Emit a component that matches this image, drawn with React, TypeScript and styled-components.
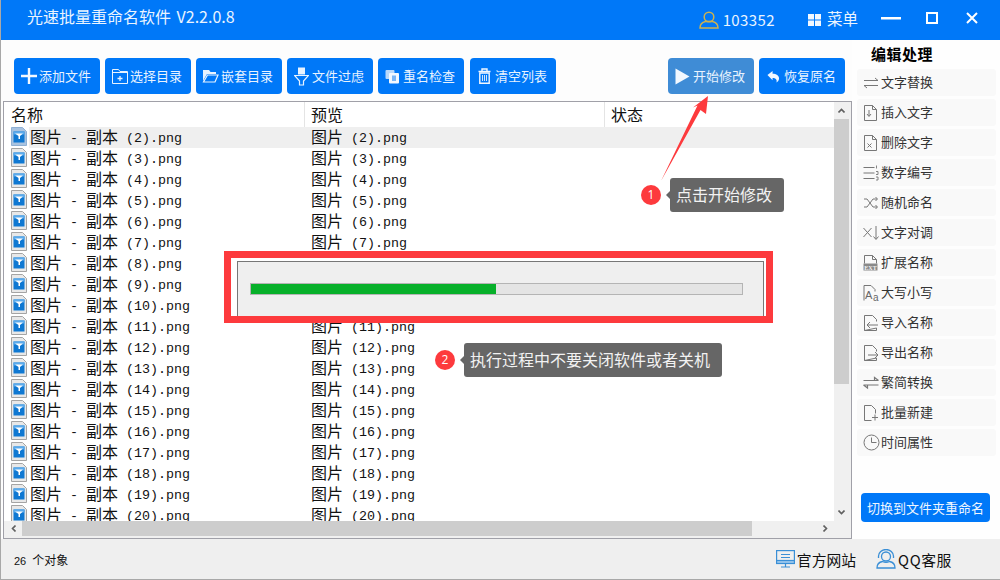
import React from "react";
import styled, { createGlobalStyle } from "styled-components";

const GlobalStyle = createGlobalStyle`
    html, body {
        margin: 0;
        padding: 0;
        background: #ffffff;
    }
    * {
        box-sizing: border-box;
    }
`;

const UI_FONT = `"Noto Sans CJK SC", "Open Sans", sans-serif`;
const BLUE = "#0078f8";
const RED = "#fd3a3d";

const Win = styled.div`
    position: relative;
    width: 1000px;
    height: 580px;
    display: flex;
    flex-direction: column;
    overflow: hidden;
    background: #fdfdfd;
    border-left: 1px solid #a8a8a8;
    border-bottom: 1px solid #a8a8a8;
    font-family: ${UI_FONT};
`;

const TitleBar = styled.div`
    height: 40px;
    flex: none;
    margin-left: -1px;
    display: flex;
    align-items: center;
    background: ${BLUE};
    color: #eaf4ff;
`;

const AppTitle = styled.div`
    margin-left: 27px;
    padding-bottom: 8px;
    font-size: 16px;
    word-spacing: 2px;
    letter-spacing: 0;
    white-space: nowrap;
`;

const User = styled.div`
    margin-left: auto;
    display: flex;
    align-items: center;
    gap: 4px;
    font-size: 15px;
    letter-spacing: 0.4px;
    padding-bottom: 1px;
`;

const MenuBtn = styled.div`
    margin-left: 33px;
    padding-bottom: 4px;
    display: flex;
    align-items: center;
    gap: 6px;
    font-size: 15.5px;
    svg {
        margin-top: 3px;
    }
`;

const WinBtns = styled.div`
    margin-left: 23px;
    margin-right: 22px;
    padding-bottom: 4px;
    display: flex;
    align-items: center;
    gap: 25px;
    svg {
        display: block;
    }
    svg:last-child {
        margin-left: 3px;
    }
`;

const Main = styled.div`
    flex: 1;
    min-height: 0;
    display: flex;
`;

const LeftCol = styled.div`
    width: 851px;
    flex: none;
    padding-left: 2px;
    display: flex;
    flex-direction: column;
`;

const Toolbar = styled.div`
    height: 61px;
    flex: none;
    padding: 18px 7px 0 11px;
    display: flex;
    justify-content: space-between;
`;

const ToolGroup = styled.div`
    display: flex;
    gap: 5px;
`;

const ToolBtn = styled.div<{ $active?: boolean; $shift?: boolean }>`
    width: 86px;
    height: 36px;
    margin-left: ${(p) => (p.$shift ? "1px" : "0")};
    display: flex;
    align-items: center;
    padding: 0 0 2px 4px;
    border-radius: 4px;
    background: ${(p) => (p.$active ? "#3f8cd6" : BLUE)};
    color: #e8f3ff;
    font-size: 13px;
    white-space: nowrap;
`;

const ToolIcon = styled.span`
    width: 21px;
    flex: none;
    display: flex;
    justify-content: center;
    padding-top: 2px;
`;

const ListBox = styled.div`
    flex: 1;
    min-height: 0;
    display: grid;
    grid-template-columns: 1fr 17px;
    grid-template-rows: 1fr 17px;
    border: 1px solid #a0a0a8;
    background: #ffffff;
`;

const ListBody = styled.div`
    overflow: hidden;
    min-width: 0;
    min-height: 0;
`;

const HeadRow = styled.div`
    height: 25px;
    display: grid;
    grid-template-columns: 300px 300px 1fr;
    font-size: 16px;
    line-height: 24px;
    color: #111;
`;

const HeadCell = styled.div`
    padding-left: 7px;
    & + & {
        border-left: 1px solid #e4e4e4;
        padding-left: 6px;
    }
`;

const Row = styled.div<{ $selected?: boolean }>`
    height: 21px;
    display: grid;
    grid-template-columns: 300px 300px 1fr;
    line-height: 20px;
    font-family: "Liberation Mono", monospace;
    font-size: 13.33px;
    color: #111;
    white-space: pre;
    background: ${(p) =>
        p.$selected
            ? "linear-gradient(to right, transparent 25px, #efefef 25px)"
            : "transparent"};
`;

const NameCell = styled.div`
    display: flex;
    align-items: flex-start;
    padding-left: 7px;
    svg {
        flex: none;
    }
`;

const PreviewCell = styled.div`
    padding-left: 7px;
    margin-top: -2px;
`;

const Cjk = styled.span`
    position: relative;
    top: 1px;
    font-family: "Noto Sans CJK SC", sans-serif;
    font-size: 16px;
`;

const RowName = styled.span`
    margin: -2px 0 0 3px;
`;

const VScroll = styled.div`
    display: flex;
    flex-direction: column;
    align-items: stretch;
    background: #f0f0f0;
    padding-right: 2px;
`;

const ScrollArrow = styled.div`
    height: 17px;
    flex: none;
    display: flex;
    align-items: center;
    justify-content: center;
`;

const VThumb = styled.div`
    height: 265px;
    background: #cdcdcd;
`;

const Spacer = styled.div`
    flex: 1;
`;

const HScroll = styled.div`
    display: flex;
    align-items: center;
    background: #f0f0f0;
    padding: 0 0 2px 1px;
`;

const HArrow = styled.div`
    width: 17px;
    height: 15px;
    flex: none;
    display: flex;
    align-items: center;
    justify-content: center;
`;

const HThumb = styled.div`
    width: 730px;
    height: 15px;
    background: #cdcdcd;
`;

const Corner = styled.div`
    background: #f0f0f0;
`;

const SidePanel = styled.div`
    flex: 1;
    display: flex;
    flex-direction: column;
    padding: 0 4px 0 5px;
    background: #fefefe;
`;

const SideTitle = styled.div`
    height: 29px;
    padding: 3px 0 0 14px;
    font-size: 15px;
    line-height: 22px;
    font-weight: 700;
    letter-spacing: 0.5px;
    color: #000;
`;

const SideList = styled.div`
    display: flex;
    flex-direction: column;
    gap: 3px;
`;

const SideItem = styled.div`
    height: 27px;
    display: flex;
    align-items: center;
    padding: 0 0 2px 6px;
    border-radius: 3px;
    background: #f9f9f9;
    font-size: 13px;
    color: #333;
    white-space: nowrap;
`;

const SideGlyph = styled.span`
    width: 18px;
    flex: none;
    display: flex;
    padding-top: 2px;
`;

const SwitchBtn = styled.div`
    margin: auto 6px 17px 4px;
    height: 29px;
    padding-bottom: 1px;
    display: flex;
    align-items: center;
    justify-content: center;
    border-radius: 4px;
    background: ${BLUE};
    color: #eef6ff;
    font-size: 13px;
    white-space: nowrap;
`;

const StatusBar = styled.div`
    height: 40px;
    flex: none;
    display: flex;
    align-items: center;
    padding-left: 13px;
    background: #efefef;
    color: #111;
`;

const Count = styled.div`
    font-family: "Liberation Sans", sans-serif;
    font-size: 11px;
    word-spacing: 3px;
    white-space: pre;
    span {
        font-family: "Noto Sans CJK SC", sans-serif;
        font-size: 12px;
    }
`;

const StatusLink = styled.div<{ $first?: boolean }>`
    display: flex;
    align-items: center;
    gap: 2px;
    margin-left: ${(p) => (p.$first ? "auto" : "20px")};
    margin-right: ${(p) => (p.$first ? "0" : "48px")};
    font-size: 14.8px;
    letter-spacing: ${(p) => (p.$first ? "0" : "0.6px")};
    color: #111;
    white-space: nowrap;
`;

/* annotations lying over the window */
const ArrowLayer = styled.svg`
    position: absolute;
    left: -1px;
    top: 0;
    pointer-events: none;
`;

const Bubble = styled.div<{ $x: number; $y: number; $w: number }>`
    position: absolute;
    left: ${(p) => p.$x - 1}px;
    top: ${(p) => p.$y}px;
    width: ${(p) => p.$w}px;
    height: 34px;
    padding-left: 6px;
    border-radius: 3px;
    background: #666666;
    color: #f2f2f2;
    font-size: 16px;
    line-height: 33px;
    white-space: nowrap;
    &::before {
        content: "";
        position: absolute;
        left: -4px;
        top: 13px;
        border-style: solid;
        border-width: 4px 4px 4px 0;
        border-color: transparent #666666 transparent transparent;
    }
`;

const Badge = styled.div<{ $x: number; $y: number }>`
    position: absolute;
    left: ${(p) => p.$x - 11}px;
    top: ${(p) => p.$y - 10}px;
    width: 20px;
    height: 20px;
    border-radius: 50%;
    background: ${RED};
    color: #fff;
    font-family: "Open Sans", sans-serif;
    font-size: 12px;
    line-height: 20px;
    text-align: center;
`;

const RedFrame = styled.div`
    position: absolute;
    left: 223px;
    top: 251px;
    width: 549px;
    height: 72px;
    padding: 3px 2px 0 6px;
    border: 7px solid ${RED};
    background: #ffffff;
`;

const ProgressDialog = styled.div`
    height: 100%;
    padding: 21px 20px 0 12px;
    border: 1px solid #777777;
    border-bottom: 0;
    background: #efefef;
`;

const ProgressTrack = styled.div`
    height: 12px;
    border: 1px solid #b4b4b4;
    background: #e4e4e4;
`;

const ProgressFill = styled.div`
    height: 100%;
    background: #07b02a;
`;

const FileIcon = ({ selected }: { selected?: boolean }) => (
    <svg width="16" height="19" viewBox="0 0 16 19">
        <path
            d="M0.500 0.500h11l4 4v14h-15z"
            fill={selected ? "#a9c3e0" : "#e8e8e8"}
            stroke={selected ? "#8fb0d4" : "#a4a4a4"}
        />
        <rect x="2.500" y="4.500" width="11" height="11" fill="#0f78d2" />
        <rect x="2.500" y="4.500" width="11" height="3" fill="#5aaaec" />
        <path d="M4 6.500h8l-3 2.500v3H7.500V9z" fill="#ffffff" />
    </svg>
);

const s = { fill: "none", stroke: "#e8f3ff", strokeWidth: 1 };

const Plus = () => (
    <svg width="16" height="16" viewBox="0 0 16 16">
        <path d="M8 0v16M0 8h16" stroke="#f2f8ff" strokeWidth="2.400" />
    </svg>
);
const FolderAdd = () => (
    <svg width="16" height="16" viewBox="0 0 16 16" {...s}>
        <path d="M0.500 1.500h6l1.500 2h7.500v12H0.500z" />
        <path d="M0.500 4.500h15" />
        <path d="M8 8v5M5.500 10.500h5" strokeWidth="1.300" />
    </svg>
);
const FolderOpen = () => (
    <svg width="17" height="16" viewBox="0 0 17 16">
        <path d="M1 2h6l1.500 2H14v2H5L1 13z" fill="#e8f3ff" />
        <path d="M5.500 7H16l-3 7H1.500z" fill="none" stroke="#e8f3ff" strokeWidth="1.200" />
    </svg>
);
const FilterIcon = () => (
    <svg width="15" height="19" viewBox="0 0 15 19">
        <path d="M4 0.500h7v7H4z" fill="#e8f3ff" />
        <path d="M0.500 8.500h14l-5 5.500v4h-4v-4z" fill="none" stroke="#e8f3ff" strokeWidth="1.200" />
    </svg>
);
const CopyIcon = () => (
    <svg width="15" height="15" viewBox="0 0 15 15">
        <rect x="0.500" y="1" width="9" height="9" fill="#b8d8fb" rx="1" />
        <rect x="4" y="4" width="10" height="10.500" fill="#f2f8ff" rx="1" />
        <rect x="7" y="6.500" width="4" height="5.500" fill="#7cb6f5" />
    </svg>
);
const TrashIcon = () => (
    <svg width="13" height="16" viewBox="0 0 13 16">
        <path d="M0.500 3.500h12M4 3V1h5v2" fill="none" stroke="#f2f8ff" strokeWidth="1.400" />
        <path d="M1.800 5h9.400v10.300H1.800z" fill="none" stroke="#f2f8ff" strokeWidth="1.400" />
        <path d="M4.500 7v6M6.500 7v6M8.500 7v6" stroke="#cfe4fc" strokeWidth="1" />
    </svg>
);
const PlayIcon = () => (
    <svg width="15" height="17" viewBox="0 0 15 17">
        <path d="M0.500 0.500l14 8-14 8z" fill="#f2f8ff" />
    </svg>
);
const UndoIcon = () => (
    <svg width="13" height="13" viewBox="0 0 14 14">
        <path d="M0.500 5.500L6 1v3c4 0 7 2 7 5 0 2-1 3.500-3 4.500 1-2 .5-5-4-5v2.500z" fill="#f2f8ff" />
    </svg>
);

const g = { fill: "none", stroke: "#777", strokeWidth: 1 };

const SideIcon = ({ kind }: { kind: string }) => {
    const page = "M1.500 1.500h8l4 4v11h-12z M9.500 1.500v4h4";
    switch (kind) {
        case "swap":
            return (
                <svg width="16" height="18" viewBox="0 0 16 18" {...g}>
                    <path d="M1 6.500h14M12 4l3 2.500M15 11.500H1M4 14l-3-2.500" />
                </svg>
            );
        case "insert":
            return (
                <svg width="16" height="18" viewBox="0 0 16 18" {...g}>
                    <path d={page} />
                    <path d="M6 6v6M4 10l2 2.500L8 10" />
                </svg>
            );
        case "delete":
            return (
                <svg width="16" height="18" viewBox="0 0 16 18" {...g}>
                    <path d={page} />
                    <path d="M4.500 9.500l4 4M8.500 9.500l-4 4" />
                </svg>
            );
        case "number":
            return (
                <svg width="16" height="18" viewBox="0 0 16 18" {...g}>
                    <path d="M0.500 3.500h11M0.500 9h11M0.500 14.500h11" />
                    <path d="M13.500 1.500v3M13 7.500h2v3h-2M13 13h2v3h-2" strokeWidth="0.900" />
                </svg>
            );
        case "shuffle":
            return (
                <svg width="16" height="18" viewBox="0 0 16 18" {...g}>
                    <path d="M1 5h3l6 8h4M1 13h3l6-8h4M12.500 3l2 2-2 2M12.500 11l2 2-2 2" />
                </svg>
            );
        case "swapText":
            return (
                <svg width="16" height="18" viewBox="0 0 16 18" {...g}>
                    <path d="M0.500 4l8 9M8.500 4l-8 9M13 2v13M10.500 12.500l2.500 3 2.500-3" />
                </svg>
            );
        case "ext":
            return (
                <svg width="16" height="18" viewBox="0 0 16 18" {...g}>
                    <path d="M1.500 1.500h8l4 4v4M1.500 9.500V1.500M9.500 1.500v4h4" />
                    <path d="M0.500 9.500h14v7h-14z" fill="#8a8a8a" stroke="none" />
                    <text x="7.500" y="15.500" textAnchor="middle" fontSize="6" fontFamily="Liberation Serif, serif" fontWeight="700" fill="#f4f4f4" stroke="none">EXT</text>
                </svg>
            );
        case "case":
            return (
                <svg width="17" height="18" viewBox="0 0 17 18" {...g}>
                    <path d="M1 16.500V1.500h7l4 4v2" />
                    <text x="2" y="15" fontSize="11" fontFamily="Liberation Sans, sans-serif" fill="#666" stroke="none">A</text>
                    <text x="10" y="16.500" fontSize="10" fontFamily="Liberation Sans, sans-serif" fill="#666" stroke="none">a</text>
                </svg>
            );
        case "import":
            return (
                <svg width="16" height="18" viewBox="0 0 16 18" {...g}>
                    <path d="M1.500 1.500h8l4 4v2M13.500 14v2.500h-12z M1.500 1.500v15" />
                    <path d="M15 11H4M7 8l-3 3 3 3" />
                </svg>
            );
        case "export":
            return (
                <svg width="16" height="18" viewBox="0 0 16 18" {...g}>
                    <path d="M1.500 1.500h8l4 4v2M13.500 14v2.500h-12z M1.500 1.500v15" />
                    <path d="M5 11h10M12 8l3 3-3 3" />
                </svg>
            );
        case "convert":
            return (
                <svg width="16" height="18" viewBox="0 0 16 18" {...g}>
                    <path d="M0.500 6.500h15M15.500 6.500L11.500 3.500v3M15.500 11H0.500M0.500 11l4 3v-3" strokeWidth="1.200" />
                </svg>
            );
        case "new":
            return (
                <svg width="16" height="18" viewBox="0 0 16 18" {...g}>
                    <path d="M1.500 16.500V1.500h7l4 4v4M1.500 16.500h7" />
                    <path d="M12 10.500v6M9 13.500h6" />
                </svg>
            );
        default:
            return (
                <svg width="17" height="17" viewBox="0 0 17 17" {...g}>
                    <circle cx="8.500" cy="8.500" r="7.500" />
                    <path d="M8.500 3.500v5h5" />
                </svg>
            );
    }
};

const Arrow = ({ d }: { d: string }) => (
    <svg width="7" height="5" viewBox="0 0 7 5">
        <path d={d} fill="none" stroke="#606060" strokeWidth="1.600" />
    </svg>
);

const HChevron = ({ d }: { d: string }) => (
    <svg width="5" height="7" viewBox="0 0 5 7">
        <path d={d} fill="none" stroke="#606060" strokeWidth="1.600" />
    </svg>
);

const sideItems = [
    ["swap", "文字替换"],
    ["insert", "插入文字"],
    ["delete", "删除文字"],
    ["number", "数字编号"],
    ["shuffle", "随机命名"],
    ["swapText", "文字对调"],
    ["ext", "扩展名称"],
    ["case", "大写小写"],
    ["import", "导入名称"],
    ["export", "导出名称"],
    ["convert", "繁简转换"],
    ["new", "批量新建"],
    ["clock", "时间属性"],
];

const numbers = Array.from({ length: 19 }, (_, i) => i + 2);

const App = () => {
    return (
        <Win>
            <GlobalStyle />
            <TitleBar>
                <AppTitle>光速批量重命名软件 V2.2.0.8</AppTitle>
                <User>
                    <svg width="20" height="18" viewBox="0 0 20 18" fill="none" stroke="#cdb24f" strokeWidth="1.500">
                        <circle cx="10" cy="6" r="4.800" />
                        <path d="M1 17c0-4 3-6 5.500-6.500h7C16 11 19 13 19 17z" />
                    </svg>
                    103352
                </User>
                <MenuBtn>
                    <svg width="13" height="12" viewBox="0 0 13 12" fill="#f2f8ff">
                        <rect width="6" height="5.500" />
                        <rect x="7" width="6" height="5.500" />
                        <rect y="6.500" width="6" height="5.500" />
                        <rect x="7" y="6.500" width="6" height="5.500" />
                    </svg>
                    菜单
                </MenuBtn>
                <WinBtns>
                    <svg width="20" height="12" viewBox="0 0 20 12">
                        <rect y="5" width="20" height="2.500" fill="#fff" />
                    </svg>
                    <svg width="12" height="12" viewBox="0 0 12 12">
                        <rect x="1" y="1" width="10" height="10" fill="none" stroke="#fff" strokeWidth="2" />
                    </svg>
                    <svg width="12" height="12" viewBox="0 0 12 12">
                        <path d="M1 1l10 10M11 1L1 11" stroke="#fff" strokeWidth="2" />
                    </svg>
                </WinBtns>
            </TitleBar>
            <Main>
                <LeftCol>
                    <Toolbar>
                        <ToolGroup>
                            <ToolBtn><ToolIcon><Plus /></ToolIcon>添加文件</ToolBtn>
                            <ToolBtn><ToolIcon><FolderAdd /></ToolIcon>选择目录</ToolBtn>
                            <ToolBtn><ToolIcon><FolderOpen /></ToolIcon>嵌套目录</ToolBtn>
                            <ToolBtn><ToolIcon><FilterIcon /></ToolIcon>文件过虑</ToolBtn>
                            <ToolBtn><ToolIcon><CopyIcon /></ToolIcon>重名检查</ToolBtn>
                            <ToolBtn $shift><ToolIcon><TrashIcon /></ToolIcon>清空列表</ToolBtn>
                        </ToolGroup>
                        <ToolGroup>
                            <ToolBtn $active><ToolIcon><PlayIcon /></ToolIcon>开始修改</ToolBtn>
                            <ToolBtn><ToolIcon><UndoIcon /></ToolIcon>恢复原名</ToolBtn>
                        </ToolGroup>
                    </Toolbar>
                    <ListBox>
                        <ListBody>
                            <HeadRow>
                                <HeadCell>名称</HeadCell>
                                <HeadCell>预览</HeadCell>
                                <HeadCell>状态</HeadCell>
                            </HeadRow>
                            {numbers.map((n) => {
                                const first = n === 2;
                                return (
                                    <Row key={n} $selected={first}>
                                        <NameCell>
                                            <FileIcon selected={first} />
                                            <RowName>
                                                <Cjk>图片</Cjk> - <Cjk>副本</Cjk> ({n}).png
                                            </RowName>
                                        </NameCell>
                                        <PreviewCell>
                                            <Cjk>图片</Cjk> ({n}).png
                                        </PreviewCell>
                                    </Row>
                                );
                            })}
                        </ListBody>
                        <VScroll>
                            <ScrollArrow><Arrow d="M0.500 4.500L3.500 1.500l3 3" /></ScrollArrow>
                            <VThumb />
                            <Spacer />
                            <ScrollArrow><Arrow d="M0.500 0.500L3.500 3.500l3-3" /></ScrollArrow>
                        </VScroll>
                        <HScroll>
                            <HArrow><HChevron d="M4.500 0.500L1.500 3.500l3 3" /></HArrow>
                            <HThumb />
                            <Spacer />
                            <HArrow><HChevron d="M0.500 0.500L3.500 3.500l-3 3" /></HArrow>
                        </HScroll>
                        <Corner />
                    </ListBox>
                </LeftCol>
                <SidePanel>
                    <SideTitle>编辑处理</SideTitle>
                    <SideList>
                        {sideItems.map(([kind, label]) => (
                            <SideItem key={kind}>
                                <SideGlyph><SideIcon kind={kind} /></SideGlyph>
                                {label}
                            </SideItem>
                        ))}
                    </SideList>
                    <SwitchBtn>切换到文件夹重命名</SwitchBtn>
                </SidePanel>
            </Main>
            <StatusBar>
                <Count>26 <span>个对象</span></Count>
                <StatusLink $first>
                    <svg width="19" height="18" viewBox="0 0 19 18" fill="none" stroke="#3a8fd6" strokeWidth="1.200">
                        <rect x="0.600" y="0.600" width="17.800" height="12.800" />
                        <rect x="0.600" y="10.500" width="17.800" height="3" fill="#9cc8ee" />
                        <path d="M5 4.500h9M5 7.500h9M9.500 13.500v3.500M5 17h9" />
                    </svg>
                    官方网站
                </StatusLink>
                <StatusLink>
                    <svg width="20" height="20" viewBox="0 0 20 20" fill="none" stroke="#3a8fd6" strokeWidth="1.300">
                        <circle cx="10" cy="7.500" r="4.500" />
                        <path d="M2.500 9V7a7.500 6.500 0 0 1 15 0v2" />
                        <path d="M1 19c0-3.500 2.500-6 5.500-6.500 2 1 5 1 7 0 3 .5 5.500 3 5.500 6.500z" />
                    </svg>
                    QQ客服
                </StatusLink>
            </StatusBar>

            <ArrowLayer width="1000" height="580" viewBox="0 0 1000 580">
                <path d="M708 96L706 114L700.500 110L661 181L697.500 105.500L693 107.500z" fill={RED} />
            </ArrowLayer>
            <Badge $x={651} $y={195}>1</Badge>
            <Bubble $x={670} $y={178} $w={114}>点击开始修改</Bubble>
            <RedFrame>
                <ProgressDialog>
                    <ProgressTrack>
                        <ProgressFill style={{ width: `${(245 / 491) * 100}%` }} />
                    </ProgressTrack>
                </ProgressDialog>
            </RedFrame>
            <Badge $x={445} $y={360}>2</Badge>
            <Bubble $x={464} $y={343} $w={258}>执行过程中不要关闭软件或者关机</Bubble>
        </Win>
    );
};

export default App;
